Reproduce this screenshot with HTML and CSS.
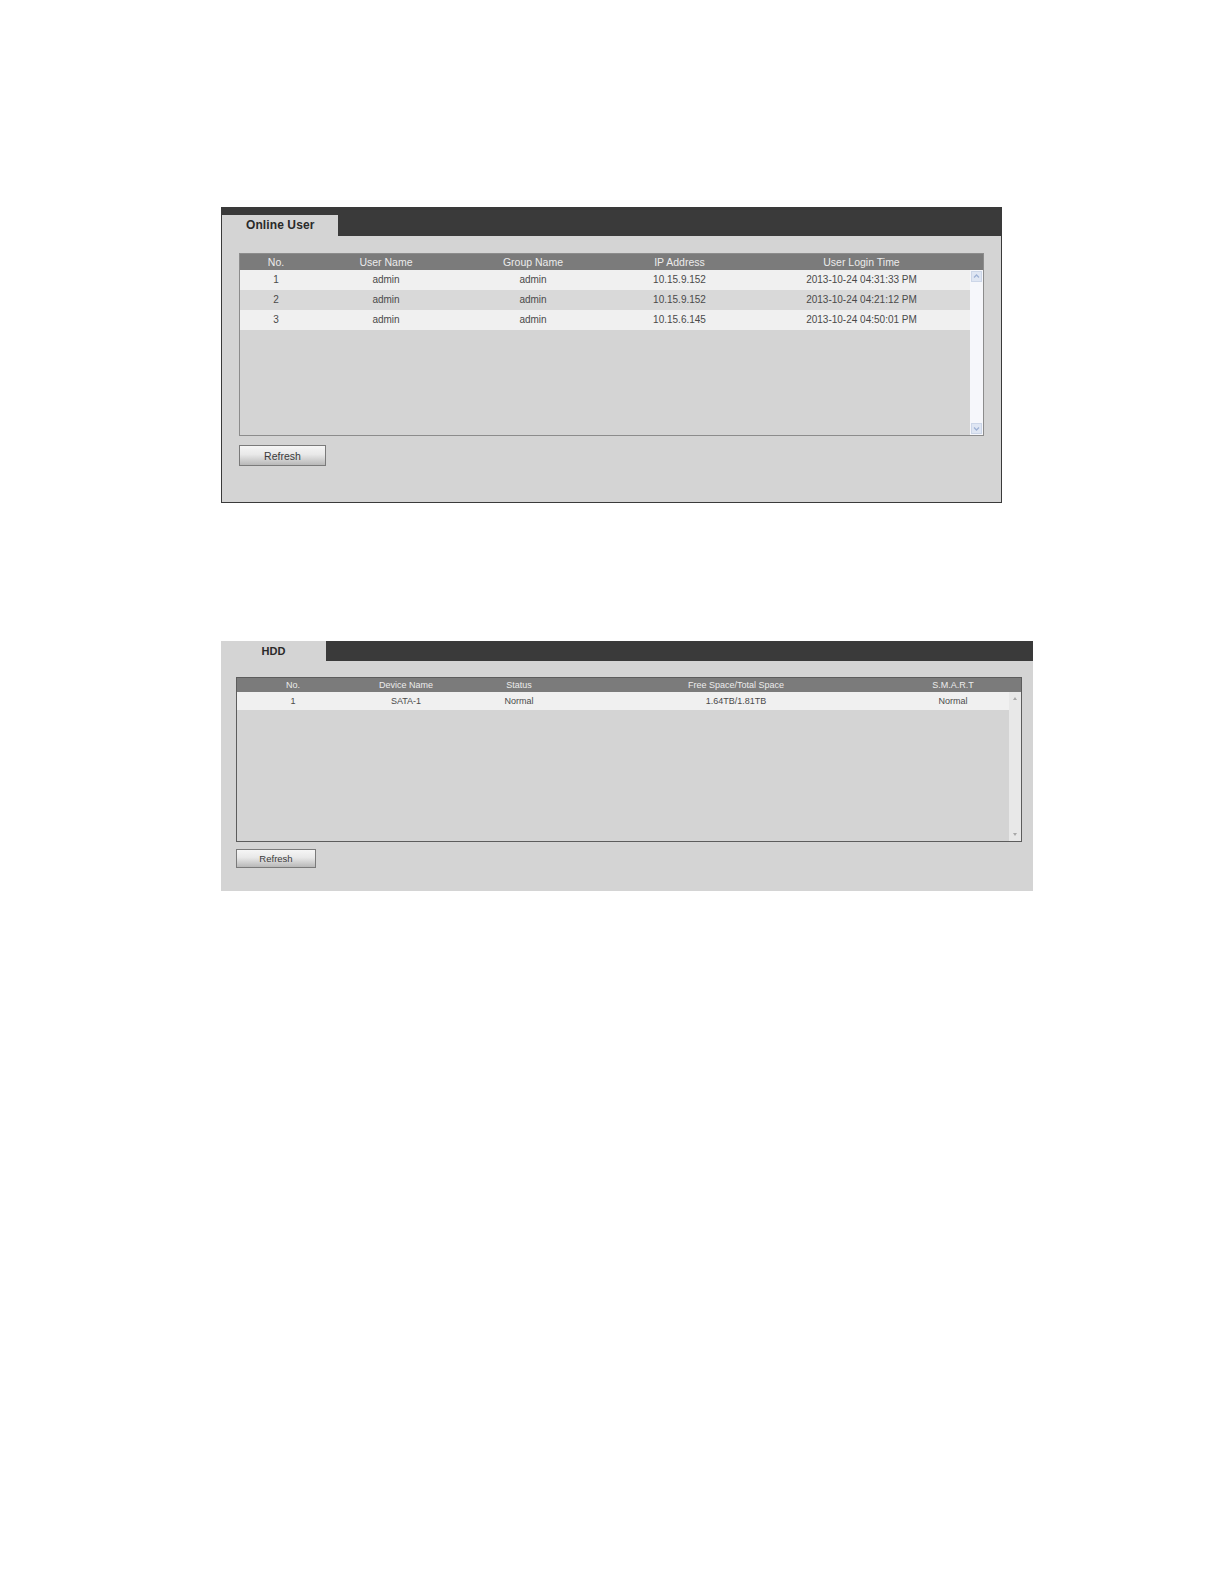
FILE: index.html
```html
<!DOCTYPE html>
<html lang="en">
<head>
<meta charset="utf-8">
<title>Online User / HDD</title>
<link rel="stylesheet" href="styles.css">
</head>
<body>
<div class="page">
  <section class="panel panel-online">
    <div class="tabbar tabbar-online"><div class="tab tab-online">Online User</div></div>
    <div class="panel-body body-online">
      <div class="grid grid-online">
        <div class="grid-head head-online">
          <span>No.</span><span>User Name</span><span>Group Name</span><span>IP Address</span><span>User Login Time</span><span></span>
        </div>
        <div class="grid-main main-online">
          <div class="rows rows-online">
            <div class="row row-online"><span>1</span><span>admin</span><span>admin</span><span>10.15.9.152</span><span>2013-10-24 04:31:33 PM</span></div>
            <div class="row row-online alt"><span>2</span><span>admin</span><span>admin</span><span>10.15.9.152</span><span>2013-10-24 04:21:12 PM</span></div>
            <div class="row row-online"><span>3</span><span>admin</span><span>admin</span><span>10.15.6.145</span><span>2013-10-24 04:50:01 PM</span></div>
          </div>
          <div class="scrollbar sb-online">
            <span class="sb-btn"><svg viewBox="0 0 9 9" width="9" height="9"><path d="M2 5.5 L4.5 3 L7 5.5" fill="none" stroke="#9fb2d4" stroke-width="1.3"/></svg></span>
            <span class="sb-btn"><svg viewBox="0 0 9 9" width="9" height="9"><path d="M2 3.5 L4.5 6 L7 3.5" fill="none" stroke="#9fb2d4" stroke-width="1.3"/></svg></span>
          </div>
        </div>
      </div>
      <button class="btn btn-online" type="button">Refresh</button>
    </div>
  </section>

  <section class="panel panel-hdd">
    <div class="tabbar tabbar-hdd"><div class="tab tab-hdd">HDD</div></div>
    <div class="panel-body body-hdd">
      <div class="grid grid-hdd">
        <div class="grid-head head-hdd">
          <span>No.</span><span>Device Name</span><span>Status</span><span>Free Space/Total Space</span><span>S.M.A.R.T</span><span></span>
        </div>
        <div class="grid-main main-hdd">
          <div class="rows rows-hdd">
            <div class="row row-hdd"><span>1</span><span>SATA-1</span><span>Normal</span><span>1.64TB/1.81TB</span><span>Normal</span></div>
          </div>
          <div class="scrollbar sb-hdd">
            <span class="tri tri-up"></span>
            <span class="tri tri-down"></span>
          </div>
        </div>
      </div>
      <button class="btn btn-hdd" type="button">Refresh</button>
    </div>
  </section>
</div>
</body>
</html>
```

FILE: styles.css
```css
html, body {
  margin: 0;
  padding: 0;
  background: #ffffff;
  font-family: "Liberation Sans", Arial, sans-serif;
}

.page {
  display: flex;
  flex-direction: column;
  align-items: flex-start;
  gap: 138px;
  padding: 207px 0 0 221px;
}

.panel {
  box-sizing: border-box;
  background: #d4d4d4;
}

.panel-online {
  width: 781px;
  border: 1px solid #3a3a3a;
  border-top: 0;
}

.panel-hdd {
  width: 812px;
}

/* Tab bar */
.tabbar {
  display: flex;
  box-sizing: border-box;
  background: #3a3a3a;
}

.tabbar-online {
  height: 29px;
  padding-top: 8px;
}

.tabbar-hdd {
  height: 20px;
}

.tab {
  box-sizing: border-box;
  background: #d4d4d4;
  color: #2a2a2a;
  font-weight: bold;
}

.tab-online {
  width: 116px;
  height: 21px;
  padding-left: 24px;
  font-size: 12px;
  line-height: 21px;
  letter-spacing: 0.1px;
}

.tab-hdd {
  width: 105px;
  height: 20px;
  text-align: center;
  font-size: 11px;
  line-height: 20px;
}

/* Body */
.body-online {
  padding: 17px 17px 36px 17px;
}

.body-hdd {
  padding: 16px 11px 23px 15px;
}

/* Grid */
.grid {
  box-sizing: border-box;
  background: #d4d4d4;
}

.grid-online {
  width: 745px;
  border: 1px solid #8c8c8c;
}

.grid-hdd {
  width: 786px;
  border: 1px solid #5c5c5c;
}

.grid-head {
  display: grid;
  background: #7b7b7b;
  color: #ececec;
  text-align: center;
  white-space: nowrap;
}

.head-online {
  grid-template-columns: 72px 148px 146px 147px 217px 13px;
  height: 16px;
  line-height: 16px;
  font-size: 10.5px;
}

.head-hdd {
  grid-template-columns: 112px 114px 112px 322px 112px 12px;
  height: 14px;
  line-height: 14px;
  font-size: 9px;
}

.grid-main {
  display: flex;
}

.main-online {
  height: 165px;
}

.main-hdd {
  height: 149px;
}

.rows-online {
  width: 730px;
}

.rows-hdd {
  width: 772px;
}

.row {
  display: grid;
  background: #f0f0f0;
  color: #4a4a4a;
  text-align: center;
  white-space: nowrap;
}

.row.alt {
  background: #d9d9d9;
}

.row-online {
  grid-template-columns: 72px 148px 146px 147px 217px;
  height: 20px;
  line-height: 20px;
  font-size: 10px;
}

.row-hdd {
  grid-template-columns: 112px 114px 112px 322px 112px;
  height: 18px;
  line-height: 18px;
  font-size: 9px;
}

/* Scrollbars */
.scrollbar {
  display: flex;
  flex-direction: column;
  justify-content: space-between;
  align-items: center;
  box-sizing: border-box;
}

.sb-online {
  width: 13px;
  background: #f6f7fb;
  padding: 1px 0;
}

.sb-btn {
  display: flex;
  align-items: center;
  justify-content: center;
  box-sizing: border-box;
  width: 11px;
  height: 11px;
  background: #dfe6f3;
  border: 1px solid #ccd6e8;
}

.sb-hdd {
  width: 12px;
  background: #e8e8e8;
  padding: 5px 0 5px;
}

.tri {
  width: 0;
  height: 0;
  border-left: 2.5px solid transparent;
  border-right: 2.5px solid transparent;
}

.tri-up {
  border-bottom: 3px solid #a8a8a8;
}

.tri-down {
  border-top: 3px solid #a8a8a8;
}

/* Buttons */
.btn {
  display: block;
  box-sizing: border-box;
  padding: 0;
  border: 1px solid #7a7a7a;
  background: linear-gradient(#f6f6f6 0%, #e8e8e8 45%, #b8b8b8 100%);
  color: #3a3a3a;
  font-family: "Liberation Sans", Arial, sans-serif;
  text-align: center;
}

.btn-online {
  width: 87px;
  height: 21px;
  margin-top: 9px;
  font-size: 10.5px;
}

.btn-hdd {
  width: 80px;
  height: 19px;
  margin-top: 7px;
  font-size: 9.5px;
}
```
